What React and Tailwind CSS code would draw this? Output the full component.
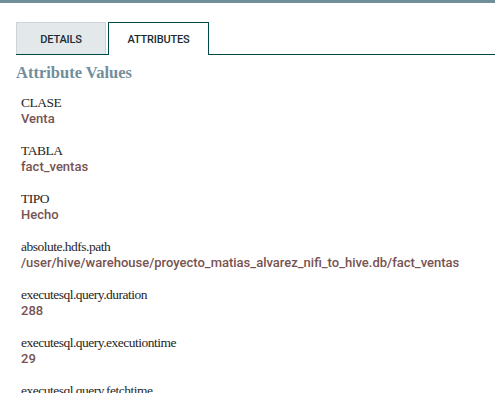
import React from "react";

const attrs = [
  ["CLASE", "Venta"],
  ["TABLA", "fact_ventas"],
  ["TIPO", "Hecho"],
  ["absolute.hdfs.path", "/user/hive/warehouse/proyecto_matias_alvarez_nifi_to_hive.db/fact_ventas"],
  ["executesql.query.duration", "288"],
  ["executesql.query.executiontime", "29"],
  ["executesql.query.fetchtime", "12"],
  ["executesql.row.count", "100"],
];

export default function App() {
  return (
    <div className="w-[495px] h-[393px] overflow-hidden bg-white">
      <div className="h-[3px] bg-[#728e9b]" />
      <div className="ml-4 mt-[19px] flex items-end border-b border-[#004849]">
        <div className="w-[90px] h-[32px] bg-[#e3e8eb] border border-b-0 border-[#cfd3d7] flex items-center justify-center pt-[3px] font-['Roboto',sans-serif] font-medium text-[11px] tracking-[-0.2px] text-[#1c2b33]">
          DETAILS
        </div>
        <div className="ml-[2px] -mb-px w-[101px] h-[33px] bg-white border border-b-0 border-[#004849] flex items-center justify-center pt-[3px] font-['Roboto',sans-serif] font-medium text-[11px] tracking-[-0.2px] text-[#1c2b33]">
          ATTRIBUTES
        </div>
      </div>
      <div className="ml-4 mt-[8px] font-['Liberation_Serif',serif] font-bold text-[16.5px] leading-[20px] text-[#728e9b]">
        Attribute Values
      </div>
      <div className="ml-[21px] mt-[12px] flex flex-col gap-[16px]">
        {attrs.map(([k, v]) => (
          <div key={k} className="flex flex-col">
            <div className="font-['Liberation_Serif',serif] text-[13.5px] tracking-[-0.5px] leading-[16px] text-[#262626]">{k}</div>
            <div className="font-['Roboto',sans-serif] font-medium text-[13px] leading-[16px] text-[#775351]">{v}</div>
          </div>
        ))}
      </div>
    </div>
  );
}
